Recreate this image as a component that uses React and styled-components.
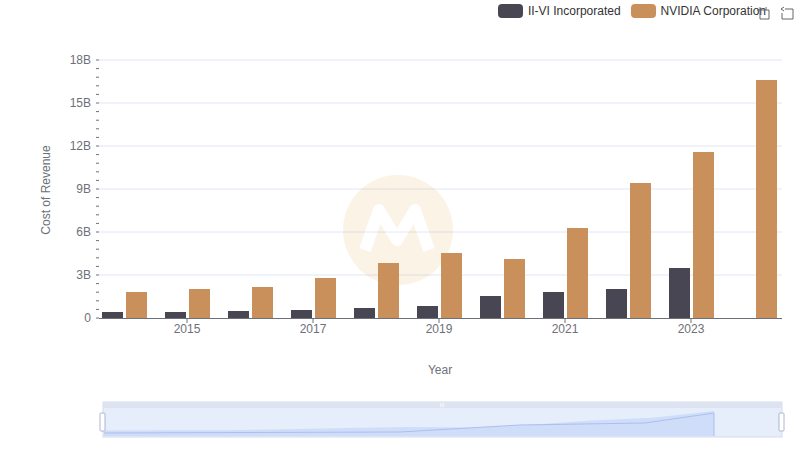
import React from "react";
import styled, { createGlobalStyle } from "styled-components";

const G = createGlobalStyle`
  body { margin: 0; background: #fff; font-family: "Liberation Sans", Arial, sans-serif; }
`;
const Page = styled.div`
  width: 800px; height: 461px; position: relative; overflow: hidden;
`;
const Legend = styled.div`
  position: absolute; top: 4px; right: 34px; display: flex; align-items: center; gap: 10px;
  font-size: 12px; color: #333;
`;
const Item = styled.div` display: flex; align-items: center; gap: 5px; `;
const Swatch = styled.span`
  width: 25px; height: 14px; border-radius: 4px; background: ${p => p.c};
`;
const Tools = styled.div`
  position: absolute; top: 6px; right: 6px; display: flex; gap: 10px;
`;

const dark = [312, 312, 311, 310, 308, 306, 296, 292, 289, 268, null];
const orange = [292, 289, 287, 278, 263, 253, 259, 228, 183, 152, 80];
const cx = i => 124 + 63 * i;

export default function App() {
  const yt = [["18B", 60], ["15B", 103], ["12B", 146], ["9B", 189], ["6B", 232], ["3B", 275], ["0", 318]];
  const minor = [];
  for (let v = 0; v <= 18; v += 0.6) minor.push(318 - v * 14.333);
  const slPts = orange.map((y, i) => [104 + i * 61, 436 - (318 - y) * 0.0924 - 3]);
  return (
    <Page>
      <G />
      <Legend>
        <Item><Swatch c="#474652" />II-VI Incorporated</Item>
        <Item><Swatch c="#c9905b" />NVIDIA Corporation</Item>
      </Legend>
      <Tools>
        <svg width="14" height="14" viewBox="0 0 14 14" fill="none" stroke="#666" strokeWidth="1">
          <path d="M4 1v12h9V4H1M4 4" /><path d="M10 1v3" />
        </svg>
        <svg width="14" height="14" viewBox="0 0 14 14" fill="none" stroke="#666" strokeWidth="1">
          <path d="M5 3h8v10H2V7M1 3l3-2M1 3l3 2" />
        </svg>
      </Tools>
      <svg width="800" height="461" style={{ display: "block" }} fontFamily="Liberation Sans, Arial, sans-serif">
        {yt.slice(0, 6).map(([, y]) => <line key={y} x1="99" x2="782" y1={y} y2={y} stroke="#e0e6f1" />)}
        {minor.map((y, i) => <line key={i} x1="96" x2="99" y1={y} y2={y} stroke="#6e7079" />)}
        {yt.map(([t, y]) => <text key={t} x="91" y={y + 4} fontSize="12" fill="#6e7079" textAnchor="end">{t}</text>)}
        <text transform="translate(50 190) rotate(-90)" fontSize="12" fill="#6e7079" textAnchor="middle">Cost of Revenue</text>
        <g opacity="0.12">
          <circle cx="398" cy="230" r="55" fill="#e8a040" />
          <path d="M365 250 l14-40 l18 30 l18-30 l14 40" fill="none" stroke="#fff" strokeWidth="12" strokeLinejoin="round" />
        </g>
        {orange.map((y, i) => (
          <g key={i}>
            {dark[i] && <rect x={cx(i) - 22} y={dark[i]} width="21" height={318 - dark[i]} fill="#474652" />}
            <rect x={cx(i) + 2} y={y} width="21" height={318 - y} fill="#c9905b" />
          </g>
        ))}
        <line x1="99" x2="782" y1="318.5" y2="318.5" stroke="#6e7079" />
        {[1, 3, 5, 7, 9].map(i => (
          <g key={i}>
            <line x1={cx(i)} x2={cx(i)} y1="318" y2="323" stroke="#6e7079" />
            <text x={cx(i)} y="333" fontSize="12" fill="#6e7079" textAnchor="middle">{2014 + i}</text>
          </g>
        ))}
        <text x="440" y="374" fontSize="12" fill="#6e7079" textAnchor="middle">Year</text>
        <rect x="103" y="402" width="679" height="35" fill="#e6edfb" stroke="#d2dbee" />
        <rect x="103" y="402" width="679" height="6" fill="#dde3f1" />
        <text x="442" y="407" fontSize="6" fill="#fff" textAnchor="middle">III</text>
        <path d={`M104 436 ${slPts.map(p => "L" + p.join(" ")).join(" ")} L714 436 Z`} fill="#d0ddf8" stroke="none" />
        <path d={`M104 433 L400 432 L520 425 L645 423 L714 413`} fill="none" stroke="#a9c0ef" />
        <line x1="714" x2="714" y1="413" y2="436" stroke="#a9c0ef" />
        <rect x="100" y="413" width="5" height="18" rx="1" fill="#fff" stroke="#aab6d0" />
        <rect x="779" y="413" width="5" height="18" rx="1" fill="#fff" stroke="#aab6d0" />
      </svg>
    </Page>
  );
}
